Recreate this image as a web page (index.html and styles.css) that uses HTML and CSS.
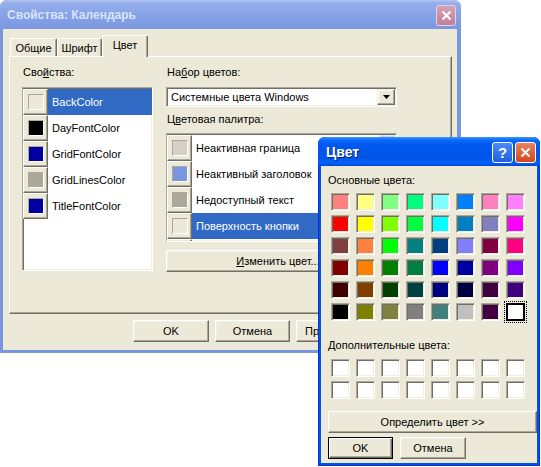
FILE: index.html
```html
<!DOCTYPE html>
<html lang="ru">
<head>
    <meta charset="UTF-8">
    <title>Свойства: Календарь</title>
    <link rel="stylesheet" href="styles.css">
</head>
<body>
    <div class="desktop">

        <!-- main properties window (inactive) -->
        <div class="win main-win">
            <div class="titlebar">
                <span class="title">Свойства: Календарь</span>
                <span class="tb-btn close-off">
                    <svg width="11" height="11" viewBox="0 0 11 11"><path d="M1.5 1.5l8 8M9.5 1.5l-8 8" stroke="#fff" stroke-width="2" fill="none"/></svg>
                </span>
            </div>
            <div class="client">
                <div class="tabs">
                    <div class="tab t1">Общие</div>
                    <div class="tab t2">Шрифт</div>
                    <div class="tab t3 active">Цвет</div>
                </div>
                <div class="panel">
                    <div class="col-left">
                        <div class="label">Сво<u>й</u>ства:</div>
                        <div class="listbox props">
                            <div class="row sel"><span class="sw"><i style="background:#ece9d8"></i></span><span class="txt">BackColor</span></div>
                            <div class="row"><span class="sw"><i style="background:#000"></i></span><span class="txt">DayFontColor</span></div>
                            <div class="row"><span class="sw"><i style="background:#0000a0"></i></span><span class="txt">GridFontColor</span></div>
                            <div class="row"><span class="sw"><i style="background:#aca899"></i></span><span class="txt">GridLinesColor</span></div>
                            <div class="row"><span class="sw"><i style="background:#0000a0"></i></span><span class="txt">TitleFontColor</span></div>
                        </div>
                    </div>
                    <div class="col-right">
                        <div class="label">На<u>б</u>ор цветов:</div>
                        <div class="combo">
                            <span class="combo-text">Системные цвета Windows</span>
                            <span class="drop">
                                <svg width="7" height="4" viewBox="0 0 7 4"><path d="M0 0h7L3.5 4z" fill="#000"/></svg>
                            </span>
                        </div>
                        <div class="label mid">Ц<u>в</u>етовая палитра:</div>
                        <div class="listbox palette">
                            <div class="rows">
                                <div class="row"><span class="sw"><i style="background:#d4d0c8"></i></span><span class="txt">Неактивная граница</span></div>
                                <div class="row"><span class="sw"><i style="background:#7a96df"></i></span><span class="txt">Неактивный заголовок</span></div>
                                <div class="row"><span class="sw"><i style="background:#aca899"></i></span><span class="txt">Недоступный текст</span></div>
                                <div class="row sel"><span class="sw"><i style="background:#ece9d8"></i></span><span class="txt">Поверхность кнопки</span></div>
                                <div class="row"><span class="sw"><i style="background:#ffffff"></i></span><span class="txt">Окно</span></div>
                            </div>
                            <div class="scroll"><span class="sbtn"></span></div>
                        </div>
                        <button class="btn change"><u>И</u>зменить цвет...</button>
                    </div>
                </div>
                <div class="buttons">
                    <button class="btn b-ok">OK</button>
                    <button class="btn b-cancel">Отмена</button>
                    <button class="btn b-apply">Применить</button>
                </div>
            </div>
        </div>

        <!-- colour picker dialog (active) -->
        <div class="win color-dlg">
            <div class="titlebar">
                <span class="title">Цвет</span>
                <span class="tb-group">
                    <span class="tb-btn help">?</span>
                    <span class="tb-btn close-on">
                        <svg width="11" height="11" viewBox="0 0 11 11"><path d="M1.5 1.5l8 8M9.5 1.5l-8 8" stroke="#fff" stroke-width="2" fill="none"/></svg>
                    </span>
                </span>
            </div>
            <div class="client dlg-body">
                <div class="label">Основные цвета:</div>
                <div class="grid basic">
                    <span class="cell" style="background:#ff8080"></span>
                    <span class="cell" style="background:#ffff80"></span>
                    <span class="cell" style="background:#80ff80"></span>
                    <span class="cell" style="background:#00ff80"></span>
                    <span class="cell" style="background:#80ffff"></span>
                    <span class="cell" style="background:#0080ff"></span>
                    <span class="cell" style="background:#ff80c0"></span>
                    <span class="cell" style="background:#ff80ff"></span>

                    <span class="cell" style="background:#ff0000"></span>
                    <span class="cell" style="background:#ffff00"></span>
                    <span class="cell" style="background:#80ff00"></span>
                    <span class="cell" style="background:#00ff40"></span>
                    <span class="cell" style="background:#00ffff"></span>
                    <span class="cell" style="background:#0080c0"></span>
                    <span class="cell" style="background:#8080c0"></span>
                    <span class="cell" style="background:#ff00ff"></span>

                    <span class="cell" style="background:#804040"></span>
                    <span class="cell" style="background:#ff8040"></span>
                    <span class="cell" style="background:#00ff00"></span>
                    <span class="cell" style="background:#008080"></span>
                    <span class="cell" style="background:#004080"></span>
                    <span class="cell" style="background:#8080ff"></span>
                    <span class="cell" style="background:#800040"></span>
                    <span class="cell" style="background:#ff0080"></span>

                    <span class="cell" style="background:#800000"></span>
                    <span class="cell" style="background:#ff8000"></span>
                    <span class="cell" style="background:#008000"></span>
                    <span class="cell" style="background:#008040"></span>
                    <span class="cell" style="background:#0000ff"></span>
                    <span class="cell" style="background:#0000a0"></span>
                    <span class="cell" style="background:#800080"></span>
                    <span class="cell" style="background:#8000ff"></span>

                    <span class="cell" style="background:#400000"></span>
                    <span class="cell" style="background:#804000"></span>
                    <span class="cell" style="background:#004000"></span>
                    <span class="cell" style="background:#004040"></span>
                    <span class="cell" style="background:#000080"></span>
                    <span class="cell" style="background:#000040"></span>
                    <span class="cell" style="background:#400040"></span>
                    <span class="cell" style="background:#400080"></span>

                    <span class="cell" style="background:#000000"></span>
                    <span class="cell" style="background:#808000"></span>
                    <span class="cell" style="background:#808040"></span>
                    <span class="cell" style="background:#808080"></span>
                    <span class="cell" style="background:#408080"></span>
                    <span class="cell" style="background:#c0c0c0"></span>
                    <span class="cell" style="background:#400040"></span>
                    <span class="cell sel" style="background:#ffffff"></span>
                </div>
                <div class="label extra">Дополнительные цвета:</div>
                <div class="grid custom">
                    <span class="cell"></span><span class="cell"></span><span class="cell"></span><span class="cell"></span>
                    <span class="cell"></span><span class="cell"></span><span class="cell"></span><span class="cell"></span>
                    <span class="cell"></span><span class="cell"></span><span class="cell"></span><span class="cell"></span>
                    <span class="cell"></span><span class="cell"></span><span class="cell"></span><span class="cell"></span>
                </div>
                <button class="btn define">Определить цвет &gt;&gt;</button>
                <div class="dlg-buttons">
                    <button class="btn default d-ok">OK</button>
                    <button class="btn d-cancel">Отмена</button>
                </div>
            </div>
        </div>

    </div>
</body>
</html>
```

FILE: styles.css
```css
* {
    padding: 0;
    margin: 0;
    box-sizing: border-box;
}

body {
    background-color: #fff;
    font-family: "Liberation Sans", Arial, sans-serif;
    font-size: 11px;
    color: #000;
}

.desktop {
    position: relative;
    width: 541px;
    height: 467px;
    overflow: hidden;
}

/* window frames */

.win {
    position: absolute;
    display: flex;
    flex-direction: column;
    border-radius: 7px 7px 0 0;
}

.titlebar {
    display: flex;
    align-items: center;
    justify-content: space-between;
    height: 29px;
    border-radius: 7px 7px 0 0;
    flex-shrink: 0;
}

.title {
    font-weight: bold;
    font-size: 13px;
}

.tb-btn {
    display: flex;
    align-items: center;
    justify-content: center;
    width: 21px;
    height: 21px;
    border-radius: 3px;
    border: 1px solid #fff;
}

.client {
    flex: 1;
    background-color: #ece9d8;
    display: flex;
    flex-direction: column;
}

/* main window */

.main-win {
    left: 0;
    top: 0;
    width: 461px;
    height: 353px;
    background-color: #7a96df;
    padding: 0 4px 3px 3px;
}

.main-win .titlebar {
    margin: 0 -4px 0 -3px;
    padding: 1px 5px 0 7px;
    background: linear-gradient(#b3c5f1 0, #97b0ec 3px, #8aa5e8 12px, #7f9ce4 24px, #7a96df 29px);
}

.main-win .title {
    color: #d8e4f8;
    font-size: 12px;
}

.close-off {
    width: 20px;
    background: linear-gradient(#d3a2b6, #c08199);
    border-color: #e3d2ea;
}

.tabs {
    display: flex;
    align-items: flex-end;
    height: 21px;
    margin: 6px 0 0 7px;
}

.tab {
    position: relative;
    height: 18px;
    display: flex;
    align-items: center;
    justify-content: center;
    border-top: 1px solid #fff;
    border-left: 1px solid #fff;
    border-right: 1px solid #716f64;
    box-shadow: inset -1px 0 #aca899;
    border-radius: 2px 2px 0 0;
    padding-top: 1px;
}

.t1 {
    width: 47px;
}

.t2 {
    width: 45px;
}

.t3 {
    width: 46px;
}

.tab.active {
    height: 22px;
    margin-bottom: -1px;
    background-color: #ece9d8;
    z-index: 1;
    padding-top: 0;
    padding-bottom: 3px;
}

.panel {
    display: flex;
    height: 258px;
    margin: 0 5px 0 6px;
    border-top: 1px solid #fff;
    border-left: 1px solid #fff;
    border-right: 1px solid #716f64;
    border-bottom: 1px solid #716f64;
    box-shadow: inset -1px -1px #aca899;
    padding: 9px 0 0 12px;
}

.label {
    height: 13px;
    line-height: 13px;
    margin-bottom: 8px;
    padding-left: 1px;
}

.col-left {
    width: 131px;
}

.col-right {
    width: 231px;
    margin-left: 13px;
    display: flex;
    flex-direction: column;
}

/* list boxes */

.listbox {
    background-color: #fff;
    border: 1px solid;
    border-color: #aca899 #fff #fff #aca899;
    box-shadow: inset 1px 1px #716f64, inset -1px -1px #f1efe2;
    padding: 1px 0 0 0;
    overflow: hidden;
}

.props {
    height: 184px;
}

.row {
    display: flex;
    align-items: center;
    height: 26px;
}

.sw {
    width: 25px;
    height: 26px;
    flex-shrink: 0;
    display: flex;
    align-items: center;
    justify-content: center;
    background-color: #ece9d8;
    border: 1px solid;
    border-color: #fff #716f64 #716f64 #fff;
    box-shadow: inset -1px -1px #aca899;
}

.sw i {
    display: block;
    width: 16px;
    height: 16px;
    border: 1px solid;
    border-color: #aca899 #fff #fff #aca899;
}

.txt {
    flex: 1;
    height: 100%;
    display: flex;
    align-items: center;
    padding-left: 4px;
    white-space: nowrap;
}

.row.sel .txt {
    background-color: #316ac5;
    color: #fff;
}

.combo {
    display: flex;
    align-items: center;
    justify-content: space-between;
    height: 20px;
    background-color: #fff;
    border: 1px solid;
    border-color: #aca899 #fff #fff #aca899;
    box-shadow: inset 1px 1px #716f64, inset -1px -1px #f1efe2;
    padding: 1px 1px 1px 4px;
}

.drop {
    width: 18px;
    height: 16px;
    display: flex;
    align-items: center;
    justify-content: center;
    background-color: #ece9d8;
    border: 1px solid;
    border-color: #f1efe2 #716f64 #716f64 #f1efe2;
    box-shadow: inset -1px -1px #aca899, inset 1px 1px #fff;
}

.label.mid {
    margin-top: 6px;
    margin-bottom: 7px;
}

.palette {
    height: 109px;
    display: flex;
}

.palette .rows {
    flex: 1;
}

.scroll {
    width: 17px;
    background-color: #f4f3ee;
}

.sbtn {
    display: block;
    height: 17px;
    background-color: #c1d3fb;
    border: 1px solid #e0e8fd;
    border-radius: 2px;
}

/* buttons */

.btn {
    font-family: "Liberation Sans", Arial, sans-serif;
    font-size: 11px;
    height: 22px;
    background-color: #ece9d8;
    border: 1px solid;
    border-color: #fff #716f64 #716f64 #fff;
    box-shadow: inset -1px -1px #aca899, inset 1px 1px #f1efe2;
    color: #000;
}

.change {
    margin-top: 8px;
    width: 224px;
}

.buttons {
    display: flex;
    gap: 6px;
    margin-top: 6px;
    padding-left: 130px;
}

.b-ok {
    width: 76px;
}

.b-cancel,
.b-apply {
    width: 75px;
}

/* colour dialog */

.color-dlg {
    left: 318px;
    top: 137px;
    width: 222px;
    height: 329px;
    background-color: #0054e3;
    padding: 0 3px 3px 3px;
    box-shadow: inset 1px 0 #0831d9, inset -1px 0 #0831d9, inset 0 -1px #0831d9;
}

.color-dlg .titlebar {
    margin: 0 -3px;
    padding: 1px 4px 0 8px;
    background: linear-gradient(#3d95ff 0, #0a6bf7 3px, #0058ee 8px, #0054e6 20px, #0062f7 26px, #0046d5 29px);
}

.color-dlg .title {
    color: #fff;
    font-size: 14px;
    text-shadow: 1px 1px #0a1e6e;
}

.tb-group {
    display: flex;
    gap: 2px;
}

.help {
    background: linear-gradient(#4c8cf8, #1f5fe0);
    color: #fff;
    font-weight: bold;
    font-size: 15px;
}

.close-on {
    background: linear-gradient(#e8845f, #d6451c);
}

.dlg-body {
    padding: 8px 0 0 7px;
}

.dlg-body .label {
    margin-bottom: 6px;
    padding-left: 0;
}

.grid {
    display: grid;
    grid-template-columns: repeat(8, 19px);
    grid-auto-rows: 18px;
    column-gap: 6px;
    row-gap: 4px;
    margin-left: 3px;
}

.cell {
    display: block;
    background-color: #fff;
    border: 1px solid;
    border-color: #aca899 #fff #fff #aca899;
    box-shadow: inset 1px 1px #716f64, inset -1px -1px #f1efe2;
}

.cell.sel {
    border: 2px solid #000;
    box-shadow: none;
    outline: 1px dotted #000;
    outline-offset: 1px;
}

.dlg-body .label.extra {
    margin-top: 18px;
    margin-bottom: 7px;
}

.define {
    width: 209px;
    margin-top: 12px;
}

.dlg-buttons {
    display: flex;
    gap: 7px;
    margin-top: 4px;
}

.d-ok {
    width: 65px;
}

.d-cancel {
    width: 66px;
}

.btn.default {
    border: 1px solid #000;
    box-shadow: inset 1px 1px #fff, inset -1px -1px #716f64, inset -2px -2px #aca899;
}
```
